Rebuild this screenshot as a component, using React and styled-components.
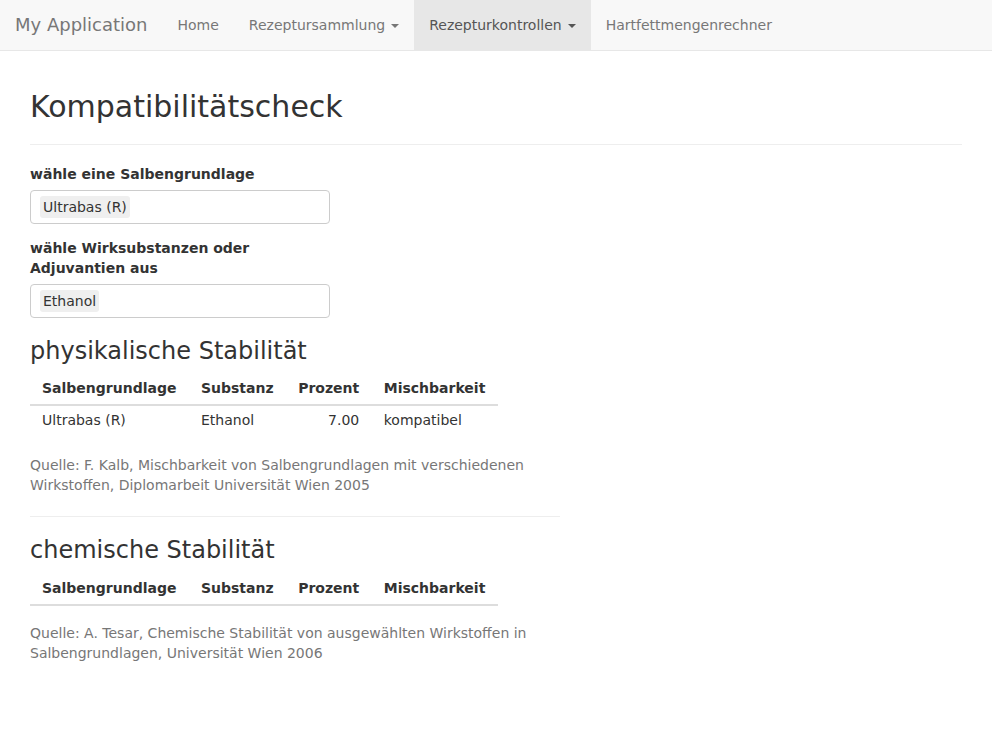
import React from "react";
import styled, { createGlobalStyle } from "styled-components";

const GlobalStyle = createGlobalStyle`
  * { box-sizing: border-box; }
  body {
    margin: 0;
    font-family: "DejaVu Sans", Verdana, sans-serif;
    font-size: 14px;
    line-height: 1.42857;
    color: #333;
    background: #fff;
  }
`;

const Navbar = styled.nav`
  display: flex;
  align-items: stretch;
  height: 51px;
  background-color: #f8f8f8;
  border-bottom: 1px solid #e7e7e7;
`;

const Brand = styled.a`
  padding: 15px;
  font-size: 18px;
  line-height: 20px;
  color: #777;
  text-decoration: none;
`;

const NavItem = styled.a`
  display: flex;
  align-items: center;
  padding: 15px;
  line-height: 20px;
  color: ${(props) => (props.active ? "#555" : "#777")};
  background-color: ${(props) => (props.active ? "#e7e7e7" : "transparent")};
  text-decoration: none;
`;

const Caret = styled.span`
  display: inline-block;
  width: 0;
  height: 0;
  margin-left: 6px;
  margin-top: 2px;
  border-top: 4px solid;
  border-right: 4px solid transparent;
  border-left: 4px solid transparent;
`;

const Container = styled.div`
  padding: 0 30px;
`;

const PageHeader = styled.div`
  margin: 39px 0 20px;
  padding-bottom: 11px;
  border-bottom: 1px solid #eee;
`;

const Title = styled.h1`
  margin: 0 0 10px;
  font-size: 30px;
  font-weight: 500;
  line-height: 33px;
`;

const Form = styled.div`
  width: 300px;
`;

const FormGroup = styled.div`
  margin-bottom: 15px;
  &:last-child { margin-bottom: 0; }
`;

const Label = styled.label`
  display: block;
  margin-bottom: 5px;
  font-weight: bold;
`;

const ChoiceBox = styled.div`
  display: flex;
  align-items: center;
  height: 34px;
  padding: 0 9px;
  border: 1px solid #ccc;
  border-radius: 4px;
  background: #fff;
`;

const Choice = styled.span`
  padding: 1px 3px;
  border-radius: 3px;
  background-color: #efefef;
  line-height: 20px;
`;

const Section = styled.section`
  width: 530px;
`;

const SectionTitle = styled.h3`
  margin: 20px 0 10px;
  font-size: 24px;
  font-weight: 500;
  line-height: 1.1;
`;

const Table = styled.table`
  border-collapse: collapse;
  margin-bottom: ${(props) => (props.$empty ? "18px" : "22px")};
`;

const Th = styled.th`
  padding: 4px 12.5px 6px 12px;
  text-align: left;
  border-bottom: 2px solid #ddd;
  line-height: 20px;
`;

const Td = styled.td`
  padding: 4px 12.5px 4px 12px;
  line-height: 20px;
  text-align: ${(props) => (props.num ? "right" : "left")};
`;

const Source = styled.div`
  color: #777;
`;

const Rule = styled.hr`
  margin: 20px 0;
  border: 0;
  border-top: 1px solid #eee;
`;

const columns = ["Salbengrundlage", "Substanz", "Prozent", "Mischbarkeit"];

const ResultTable = ({ rows }) => (
  <Table $empty={rows.length === 0}>
    <thead>
      <tr>
        {columns.map((c) => (
          <Th key={c}>{c}</Th>
        ))}
      </tr>
    </thead>
    <tbody>
      {rows.map((r, i) => (
        <tr key={i}>
          <Td>{r.base}</Td>
          <Td>{r.substance}</Td>
          <Td num>{r.percent}</Td>
          <Td>{r.result}</Td>
        </tr>
      ))}
    </tbody>
  </Table>
);

export default function App() {
  return (
    <>
      <GlobalStyle />
      <Navbar>
        <Brand>My Application</Brand>
        <NavItem>Home</NavItem>
        <NavItem>
          Rezeptursammlung <Caret />
        </NavItem>
        <NavItem active>
          Rezepturkontrollen <Caret />
        </NavItem>
        <NavItem>Hartfettmengenrechner</NavItem>
      </Navbar>
      <Container>
        <PageHeader>
          <Title>Kompatibilitätscheck</Title>
        </PageHeader>
        <Form>
          <FormGroup>
            <Label>wähle eine Salbengrundlage</Label>
            <ChoiceBox>
              <Choice>Ultrabas (R)</Choice>
            </ChoiceBox>
          </FormGroup>
          <FormGroup>
            <Label>wähle Wirksubstanzen oder Adjuvantien aus</Label>
            <ChoiceBox>
              <Choice>Ethanol</Choice>
            </ChoiceBox>
          </FormGroup>
        </Form>
        <Section>
          <SectionTitle>physikalische Stabilität</SectionTitle>
          <ResultTable
            rows={[
              { base: "Ultrabas (R)", substance: "Ethanol", percent: "7.00", result: "kompatibel" },
            ]}
          />
          <Source>
            Quelle: F. Kalb, Mischbarkeit von Salbengrundlagen mit verschiedenen Wirkstoffen,
            Diplomarbeit Universität Wien 2005
          </Source>
          <Rule />
          <SectionTitle>chemische Stabilität</SectionTitle>
          <ResultTable rows={[]} />
          <Source>
            Quelle: A. Tesar, Chemische Stabilität von ausgewählten Wirkstoffen in
            Salbengrundlagen, Universität Wien 2006
          </Source>
        </Section>
      </Container>
    </>
  );
}
